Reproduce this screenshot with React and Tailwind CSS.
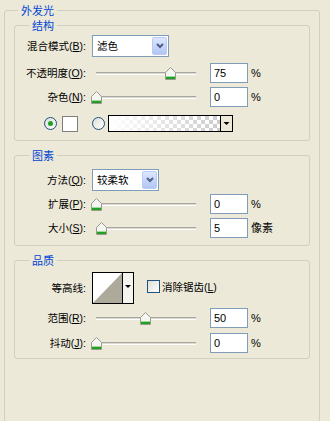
import React from 'react';

function GroupBox({ title, className, legendClass, children }) {
  return (
    <fieldset className={`rounded-[3px] border border-[#D0D0BF] ${className}`}>
      <legend className={`px-[3px] font-['Noto_Sans_CJK_SC',sans-serif] text-[11px] leading-[13px] text-[#0046D5] ${legendClass}`}>{title}</legend>
      {children}
    </fieldset>
  );
}

function Row({ label, className, children }) {
  return (
    <div className={`flex items-center ${className}`}>
      <div className="w-[71px] whitespace-nowrap text-right text-[10.5px] leading-[13px] text-black">{label}</div>
      {children}
    </div>
  );
}

function Key({ k }) {
  return <span className="underline underline-offset-1">{k}</span>;
}

function Thumb({ left }) {
  return (
    <svg className="absolute top-[4px]" style={{ left }} width="11" height="13" viewBox="0 0 11 13">
      <path d="M5.5 0.5 L10.5 5.5 L10.5 12.5 L0.5 12.5 L0.5 5.5 Z" fill="#F5F5F1" stroke="#9A9A90" />
      <rect x="1" y="10" width="9" height="2" fill="#21A121" />
      <rect x="1" y="9" width="9" height="1" fill="#9BDB9B" />
    </svg>
  );
}

function Slider({ offset }) {
  return (
    <div className="relative ml-[5px] h-[20px] w-[112px] shrink-0">
      <div className="absolute left-[5px] top-[9px] h-[3px] w-[100px] border-y border-t-[#A7A6A0] border-b-white bg-[#DCDAD0]" />
      <Thumb left={offset} />
    </div>
  );
}

function NumBox({ value }) {
  return (
    <div className="ml-[7px] h-[20px] w-[38px] shrink-0 border border-[#7F9DB9] bg-white pl-[3px] text-[11px] leading-[18px] text-black">
      {value}
    </div>
  );
}

function Unit({ children }) {
  return <span className="ml-[3px] text-[11px] leading-[13px] text-black">{children}</span>;
}

function Combo({ value, width }) {
  return (
    <div className={`ml-[6px] flex h-[22px] items-stretch border border-[#7F9DB9] bg-white p-[1px] ${width}`}>
      <span className="flex-1 pl-[3px] text-[10.5px] leading-[18px] text-black">{value}</span>
      <div className="flex w-[15px] items-center justify-center rounded-[2px] border border-[#B9CCF7] bg-gradient-to-b from-[#DCE6FE] to-[#B2C6F4]">
        <svg width="8" height="6" viewBox="0 0 8 6">
          <path d="M1 1 L4 4 L7 1" fill="none" stroke="#4D6185" strokeWidth="2" />
        </svg>
      </div>
    </div>
  );
}

function Radio({ checked }) {
  return (
    <svg width="13" height="13" viewBox="0 0 13 13" className="shrink-0">
      <defs>
        <linearGradient id={checked ? 'rg1' : 'rg2'} x1="0" y1="0" x2="1" y2="1">
          <stop offset="0" stopColor="#DCDCD7" />
          <stop offset="1" stopColor="#FFFFFF" />
        </linearGradient>
      </defs>
      <circle cx="6.5" cy="6.5" r="6" fill={`url(#${checked ? 'rg1' : 'rg2'})`} stroke="#1C5180" />
      {checked && <circle cx="6.5" cy="6.5" r="2.5" fill="#21A121" />}
    </svg>
  );
}

function GradientPreview() {
  return (
    <svg width="125" height="17" viewBox="0 0 125 17" className="ml-[3px] shrink-0">
      <defs>
        <pattern id="chk" width="8" height="8" patternUnits="userSpaceOnUse" x="1" y="1">
          <rect width="8" height="8" fill="#FFFFFF" />
          <rect width="4" height="4" fill="#CCCCCC" />
          <rect x="4" y="4" width="4" height="4" fill="#CCCCCC" />
        </pattern>
        <linearGradient id="fade" x1="0" y1="0" x2="1" y2="0">
          <stop offset="0" stopColor="#FFFFFF" stopOpacity="1" />
          <stop offset="1" stopColor="#FFFFFF" stopOpacity="0" />
        </linearGradient>
      </defs>
      <rect x="0.5" y="0.5" width="124" height="16" fill="#ECE9D8" stroke="#000000" />
      <rect x="1" y="1" width="111" height="15" fill="url(#chk)" />
      <rect x="1" y="1" width="111" height="15" fill="url(#fade)" />
      <line x1="112.5" y1="1" x2="112.5" y2="16" stroke="#000000" />
      <path d="M115.5 7 L121.5 7 L118.5 10 Z" fill="#000000" />
    </svg>
  );
}

function ContourPreview() {
  return (
    <svg width="42" height="32" viewBox="0 0 42 32" className="ml-[6px] shrink-0">
      <rect x="0.5" y="0.5" width="41" height="31" fill="#F4F3EE" stroke="#000000" />
      <path d="M1 1 L30 1 L1 31 Z" fill="#FFFFFF" />
      <path d="M30 1 L30 31 L1 31 Z" fill="#ADAA9C" />
      <line x1="30.5" y1="1" x2="30.5" y2="31" stroke="#000000" />
      <path d="M33 13 L39 13 L36 16 Z" fill="#000000" />
    </svg>
  );
}

function Checkbox() {
  return (
    <svg width="13" height="13" viewBox="0 0 13 13" className="shrink-0">
      <defs>
        <linearGradient id="cb" x1="0" y1="0" x2="1" y2="1">
          <stop offset="0" stopColor="#DCDCD7" />
          <stop offset="1" stopColor="#FFFFFF" />
        </linearGradient>
      </defs>
      <rect x="0.5" y="0.5" width="12" height="12" fill="url(#cb)" stroke="#1C5180" />
    </svg>
  );
}

export default function App() {
  return (
    <div className="h-[421px] w-[330px] overflow-hidden bg-[#ECE9D8] pl-[4px] font-['Liberation_Sans','Noto_Sans_CJK_SC',sans-serif]">
      <GroupBox title="外发光" className="mt-[4px] h-[440px] w-[316px]" legendClass="ml-[13px]">
        <GroupBox title="结构" className="ml-[9px] mt-[2px] w-[296px] pb-[8px]" legendClass="ml-[14px]">
          <Row label={<>混合模式(<Key k="B" />):</>} className="mt-[3px] h-[22px]">
            <Combo value="滤色" width="w-[77px]" />
          </Row>
          <Row label={<>不透明度(<Key k="O" />):</>} className="mt-[6px] h-[20px]">
            <Slider offset={74} />
            <NumBox value="75" />
            <Unit>%</Unit>
          </Row>
          <Row label={<>杂色(<Key k="N" />):</>} className="mt-[4px] h-[20px]">
            <Slider offset={0} />
            <NumBox value="0" />
            <Unit>%</Unit>
          </Row>
          <div className="ml-[29px] mt-[8px] flex h-[17px] items-center">
            <Radio checked />
            <div className="ml-[5px] h-[16px] w-[16px] border border-[#7F7F7F] bg-white" />
            <div className="ml-[14px]"><Radio /></div>
            <GradientPreview />
          </div>
        </GroupBox>

        <GroupBox title="图素" className="ml-[9px] mt-[8px] w-[296px] pb-[7px]" legendClass="ml-[14px]">
          <Row label={<>方法(<Key k="Q" />):</>} className="mt-[7px] h-[22px]">
            <Combo value="较柔软" width="w-[67px]" />
          </Row>
          <Row label={<>扩展(<Key k="P" />):</>} className="mt-[3px] h-[20px]">
            <Slider offset={0} />
            <NumBox value="0" />
            <Unit>%</Unit>
          </Row>
          <Row label={<>大小(<Key k="S" />):</>} className="mt-[4px] h-[20px]">
            <Slider offset={5} />
            <NumBox value="5" />
            <Unit>像素</Unit>
          </Row>
        </GroupBox>

        <GroupBox title="品质" className="ml-[9px] mt-[8px] w-[296px] pb-[5px]" legendClass="ml-[14px]">
          <div className="mt-[5px] flex h-[32px] items-center">
            <div className="w-[71px] whitespace-nowrap text-right text-[10.5px] leading-[13px] text-black">等高线:</div>
            <ContourPreview />
            <div className="ml-[13px] flex items-center self-start pt-[7px]">
              <Checkbox />
              <span className="ml-[2px] mt-[2px] text-[10.5px] leading-[13px] text-black">消除锯齿(<Key k="L" />)</span>
            </div>
          </div>
          <Row label={<>范围(<Key k="R" />):</>} className="mt-[4px] h-[20px]">
            <Slider offset={49} />
            <NumBox value="50" />
            <Unit>%</Unit>
          </Row>
          <Row label={<>抖动(<Key k="J" />):</>} className="mt-[5px] h-[20px]">
            <Slider offset={0} />
            <NumBox value="0" />
            <Unit>%</Unit>
          </Row>
        </GroupBox>
      </GroupBox>
    </div>
  );
}
